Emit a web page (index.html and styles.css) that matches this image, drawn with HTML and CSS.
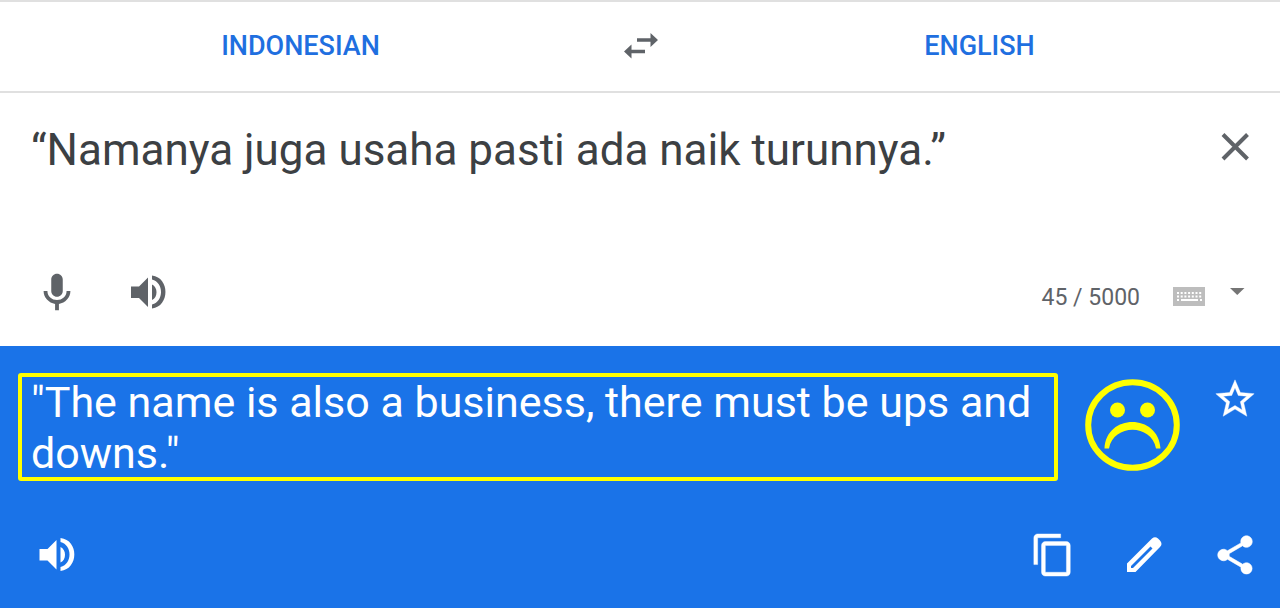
FILE: index.html
```html
<!DOCTYPE html>
<html lang="en">
<head>
<meta charset="utf-8">
<meta name="viewport" content="width=device-width, initial-scale=1">
<title>Translate</title>
<link rel="stylesheet" href="styles.css">
</head>
<body>
<header class="languages">
  <button class="language" type="button">INDONESIAN</button>
  <button class="icon-button" type="button" aria-label="Swap languages">
    <svg class="icon" viewBox="0 0 46 46"><path d="M20 15.200H33.500V10L41 17L33.500 24V18.800H20zM28 26.800H14.500V21.500L7 28.500L14.500 35.500V30.300H28z"/></svg>
  </button>
  <button class="language" type="button">ENGLISH</button>
</header>
<main class="translator">
  <section class="source">
    <div class="source-entry">
      <textarea class="source-text" aria-label="Source text" spellcheck="false">“Namanya juga usaha pasti ada naik turunnya.”</textarea>
      <button class="icon-button" type="button" aria-label="Clear source text">
        <svg class="icon" viewBox="0 0 46 46"><path class="line" d="M11 11.500L35.500 36M35.500 11.500L11 36"/></svg>
      </button>
    </div>
    <div class="toolbar">
      <div class="tools">
        <button class="icon-button" type="button" aria-label="Translate by voice">
          <svg class="icon" viewBox="0 0 24 24"><path d="M12 14.500c1.660 0 3-1.340 3-3V5.500c0-1.660-1.340-3-3-3S9 3.840 9 5.500v6c0 1.660 1.340 3 3 3zM17 11.500c0 2.900-2.300 4.700-5 4.700s-5-1.800-5-4.700H5c0 3.410 2.720 6.230 6 6.720V21.500h2v-3.280c3.280-.480 6-3.300 6-6.720z"/></svg>
        </button>
        <button class="icon-button" type="button" aria-label="Listen to source text">
          <svg class="icon" viewBox="0 0 46 46"><path d="M6 17.500H14L23 8.500V38L14 29H6zM27 15.500C33 18 33 28.500 27 31zM27 6.500C45 8.500 45 37.500 27 39.500V35.500C39 32.500 39 13.500 27 10.500z"/></svg>
        </button>
      </div>
      <div class="input-info">
        <span class="counter">45 / 5000</span>
        <button class="keyboard-button" type="button" aria-label="Show keyboard">
          <svg class="keyboard" viewBox="0 0 32 19"><path fill="#bdbdbd" d="M0 0h32v19H0z"/><path fill="none" stroke="#fff" stroke-width="2" stroke-dasharray="2 1.700" d="M4 6h25M4 9.500h25"/><path stroke="#fff" stroke-width="2" d="M4 13h2M8 13h17M27 13h2"/></svg>
        </button>
        <button class="icon-button" type="button" aria-label="Choose input tool">
          <svg class="icon" viewBox="0 0 46 46"><path fill="#757575" d="M18 19H32.500L25.250 26z"/></svg>
        </button>
      </div>
    </div>
  </section>
  <section class="result">
    <div class="result-entry">
      <div class="highlight"><p class="result-text">"The name is also a business, there must be ups and downs."</p></div>
      <svg class="face" viewBox="0 0 95 92" role="img" aria-label="Sad face"><ellipse cx="47.500" cy="46" rx="44.300" ry="42.800" fill="none" stroke="#ff0" stroke-width="6"/><circle cx="32.500" cy="31" r="7.500" fill="#ff0"/><circle cx="62.500" cy="31" r="7.500" fill="#ff0"/><path fill="#ff0" d="M19.500 69.500C21 34 73.500 34 75.500 69.500H71C66.500 44.500 28.500 44.500 24 69.500z"/></svg>
      <button class="icon-button favorite" type="button" aria-label="Save translation">
        <svg class="icon" viewBox="0 0 24 24"><path d="M22 9.240l-7.190-.620L12 2 9.190 8.630 2 9.240l5.460 4.730L5.820 21 12 17.270 18.180 21l-1.630-7.030L22 9.240zM12 15.400l-3.760 2.270 1-4.280-3.320-2.880 4.380-.380L12 6.100l1.710 4.040 4.380.380-3.320 2.880 1 4.280L12 15.400z" stroke="currentColor" stroke-width=".2"/></svg>
      </button>
    </div>
    <div class="toolbar">
      <div class="tools">
        <button class="icon-button" type="button" aria-label="Listen to translation">
          <svg class="icon" viewBox="0 0 46 46"><path d="M5.500 17H13.500L22.500 8V37.500L13.500 28.500H5.500zM26.500 15C32.500 17.500 32.500 28 26.500 30.500zM26.500 6C45 8 45 37 26.500 39V35C38.500 32 38.500 13 26.500 10z"/></svg>
        </button>
      </div>
      <div class="tools">
        <button class="icon-button" type="button" aria-label="Copy translation">
          <svg class="icon" viewBox="0 0 24 24"><path d="M16 1H4c-1.100 0-2 .900-2 2v14h2V3h12V1zm3 4H8c-1.100 0-2 .900-2 2v14c0 1.100.900 2 2 2h11c1.100 0 2-.900 2-2V7c0-1.100-.900-2-2-2zm0 16H8V7h11v14z" stroke="currentColor" stroke-width=".2"/></svg>
        </button>
        <button class="icon-button" type="button" aria-label="Suggest an edit">
          <svg class="icon" viewBox="0 0 46 46"><path fill-rule="evenodd" d="M6 40V31.500L31 6.500Q34 4 37 6.500L39 8.500Q42 12 39 15L14.500 40zM10 36H12L31.500 16.500L29.500 14.500L10 34z"/></svg>
        </button>
        <button class="icon-button" type="button" aria-label="Share translation">
          <svg class="icon" viewBox="0 0 24 24"><path d="M18 16.080c-.760 0-1.440.300-1.960.770L8.910 12.700c.050-.230.090-.460.090-.700s-.040-.470-.090-.700l7.050-4.110c.540.500 1.250.810 2.040.810 1.660 0 3-1.340 3-3s-1.340-3-3-3-3 1.340-3 3c0 .240.040.470.090.700L8.040 9.810C7.500 9.310 6.790 9 6 9c-1.660 0-3 1.340-3 3s1.340 3 3 3c.790 0 1.500-.310 2.040-.810l7.120 4.160c-.050.210-.080.430-.080.650 0 1.610 1.310 2.920 2.920 2.920s2.920-1.310 2.920-2.920-1.310-2.920-2.920-2.920z" stroke="currentColor" stroke-width=".3"/></svg>
        </button>
      </div>
    </div>
  </section>
</main>
</body>
</html>
```
FILE: styles.css
```css
* {
  box-sizing: border-box;
}

body {
  display: flex;
  flex-direction: column;
  min-height: 100vh;
  margin: 0;
  background: #fff;
  color: #3c4043;
  font-family: Roboto, "Liberation Sans", sans-serif;
}

button {
  padding: 0;
  border: 0;
  background: none;
  color: inherit;
  font: inherit;
  cursor: pointer;
}

.languages {
  display: grid;
  grid-template-columns: 1fr 46px 1fr;
  align-items: center;
  column-gap: 16px;
  padding: 21px 0 22px;
  border-top: 2px solid #e0e0e0;
  border-bottom: 2px solid #e0e0e0;
  color: #5f6368;
}

.language {
  color: #1f6fe0;
  font-size: 27px;
  font-weight: 500;
  line-height: 32px;
}

.icon-button {
  display: block;
  flex: none;
  width: 46px;
  height: 46px;
}

.icon {
  display: block;
  width: 46px;
  height: 46px;
  fill: currentColor;
}

.line {
  fill: none;
  stroke: currentColor;
  stroke-width: 4;
}

.translator {
  display: flex;
  flex: 1;
  flex-direction: column;
}

.source {
  padding: 30px 22px 31px 0;
  color: #5f6368;
}

.source-entry {
  display: flex;
  align-items: flex-start;
}

.source-text {
  flex: 1;
  min-width: 0;
  height: 146px;
  padding: 2px 0 0 31px;
  border: 0;
  outline: 0;
  background: none;
  color: #3c4043;
  font: inherit;
  font-size: 44px;
  line-height: 51px;
  overflow: hidden;
  resize: none;
}

.toolbar {
  display: flex;
  justify-content: space-between;
  padding-left: 34px;
}

.tools {
  display: flex;
  gap: 45px;
}

.input-info {
  display: flex;
  align-items: center;
}

.counter {
  margin-right: 33px;
  padding-top: 12px;
  font-size: 23px;
  line-height: 28px;
}

.keyboard-button {
  margin-right: 7px;
  padding-top: 8px;
}

.keyboard {
  display: block;
  width: 32px;
  height: 19px;
}

.result {
  display: flex;
  flex: 1;
  flex-direction: column;
  justify-content: space-between;
  padding: 27px 22px 30px 0;
  background: #1a73e8;
  color: #fff;
}

.result-entry {
  display: flex;
  align-items: flex-start;
  padding-left: 18px;
}

.highlight {
  flex: 1;
  padding-left: 9px;
  border: 4px solid #ff0;
  border-radius: 3px;
}

.result-text {
  margin: 0 0 -2px;
  font-size: 43px;
  line-height: 51px;
}

.face {
  flex: none;
  width: 95px;
  height: 92px;
  margin: 6px 32px 0 27px;
}

.favorite {
  margin-top: 3px;
}
```
